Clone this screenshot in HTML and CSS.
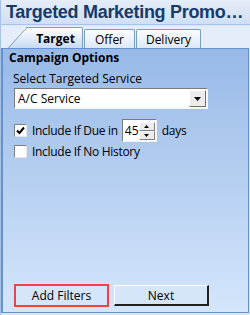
FILE: index.html
```html
<!DOCTYPE html>
<html>
<head>
<title>Targeted Marketing Promotion</title>
<meta charset='utf-8'/>
<link rel="stylesheet" href="styles.css">
</head>
<body>
<div class="window">
	<div class="title">Targeted Marketing Promo…</div>
	<div class="tabs">
		<div class="tab active">
			<svg class="slant" width="20" height="21" viewBox="0 0 20 21"><path d="M0.5 21 L18 1.5 L20 0.5" fill="none" stroke="#7b9ebd"/></svg>
			<span>Target</span>
		</div>
		<div class="tab offer"><span>Offer</span></div>
		<div class="tab delivery"><span>Delivery</span></div>
	</div>
	<div class="panel">
		<div class="heading">Campaign Options</div>
		<div class="label">Select Targeted Service</div>
		<div class="select">
			<span class="value">A/C Service</span>
			<span class="drop"><svg width="7" height="4" viewBox="0 0 7 4"><path d="M0 0 H7 L3.5 4 Z" fill="#000"/></svg></span>
		</div>
		<div class="row">
			<span class="box"><svg width="11" height="11" viewBox="0 0 11 11"><path d="M2 5.5 L4.5 8 L9 2.5" fill="none" stroke="#000" stroke-width="2"/></svg></span>
			<span class="text">Include If Due in</span>
			<span class="spin">
				<span class="num">45</span>
				<span class="arrows">
					<span class="arr"><svg width="5" height="3" viewBox="0 0 5 3"><path d="M0 3 H5 L2.5 0 Z" fill="#000"/></svg></span>
					<span class="arr"><svg width="5" height="3" viewBox="0 0 5 3"><path d="M0 0 H5 L2.5 3 Z" fill="#000"/></svg></span>
				</span>
			</span>
			<span class="text">days</span>
		</div>
		<div class="row second">
			<span class="box"></span>
			<span class="text">Include If No History</span>
		</div>
		<div class="buttons">
			<div class="btn marked">Add Filters</div>
			<div class="btn">Next</div>
		</div>
	</div>
</div>
</body>
</html>
```

FILE: styles.css
```css
body {
	margin: 0;
	font-family: "Open Sans", "DejaVu Sans", sans-serif;
	font-size: 12px;
	color: #000;
}
.window {
	width: 250px;
	height: 315px;
	display: flex;
	flex-direction: column;
	background: #d9e6f6;
	border-left: 1px solid #a6c2e6;
	box-sizing: border-box;
	overflow: hidden;
}
.title {
	height: 24px;
	line-height: 25px;
	padding-left: 5px;
	font-family: "Liberation Sans", sans-serif;
	font-size: 18px;
	font-weight: bold;
	color: #173a6b;
	background: linear-gradient(#e4edf8, #cfdff3);
	border-bottom: 1px solid #a9c4e8;
	white-space: nowrap;
	letter-spacing: -0.3px;
}
.tabs {
	height: 22px;
	display: flex;
	align-items: flex-end;
	padding-left: 6px;
	background: #e4edf9;
	margin-top: 1px;
}
.tab {
	height: 19px;
	display: flex;
	align-items: center;
	justify-content: center;
	border: 1px solid #7b9ebd;
	border-bottom: none;
	border-radius: 2px 2px 0 0;
	background: linear-gradient(#fbfdff, #dde8f7);
	box-sizing: border-box;
	margin-right: 1px;
}
.tab.active {
	position: relative;
	height: 21px;
	width: 76px;
	padding-left: 22px;
	border-left: none;
	font-weight: bold;
	background: linear-gradient(#ffffff, #c7daf3);
	clip-path: polygon(0 100%, 18px 1px, 20px 0, 100% 0, 100% 100%);
}
.tab .slant {
	position: absolute;
	left: 0;
	top: 0;
}
.tab.offer {
	width: 51px;
}
.tab.delivery {
	width: 65px;
}
.panel {
	flex: 1;
	display: flex;
	flex-direction: column;
	background: linear-gradient(#98b9e7, #d4e6fb);
	border: 1px solid #6591cd;
	border-left-width: 2px;
	margin-right: 1px;
	margin-bottom: 2px;
	padding: 0 6px 5px 6px;
}
.heading {
	font-weight: bold;
	height: 17px;
}
.label {
	margin-top: 4px;
	padding-left: 4px;
	height: 17px;
}
.select {
	margin: 1px 0 0 5px;
	width: 194px;
	height: 21px;
	display: flex;
	align-items: center;
	justify-content: space-between;
	background: #fff;
	border: 1px solid #7a7a7a;
	border-right-color: #f4f4f4;
	border-bottom-color: #f4f4f4;
	box-sizing: border-box;
}
.select .value {
	padding-left: 3px;
}
.drop {
	width: 17px;
	height: 17px;
	margin-right: 1px;
	display: flex;
	align-items: center;
	justify-content: center;
	background: #ececec;
	border: 1px solid #fff;
	border-right-color: #707070;
	border-bottom-color: #707070;
	box-sizing: border-box;
}
.row {
	display: flex;
	align-items: center;
	margin: 10px 0 0 5px;
	height: 23px;
}
.row .text {
	letter-spacing: -0.3px;
}
.row.second {
	margin-top: 1px;
	height: 16px;
}
.box {
	width: 13px;
	height: 13px;
	box-sizing: border-box;
	background: #fff;
	border: 1px solid #808080;
	border-right-color: #e6e6e6;
	border-bottom-color: #e6e6e6;
	display: flex;
	align-items: center;
	justify-content: center;
	margin-right: 5px;
}
.spin {
	width: 35px;
	height: 23px;
	display: flex;
	align-items: center;
	margin: 0 5px 0 4px;
	background: #fff;
	border: 1px solid #7a7a7a;
	border-right-color: #f4f4f4;
	border-bottom-color: #f4f4f4;
	box-sizing: border-box;
}
.num {
	flex: 1;
	padding-left: 2px;
}
.arrows {
	width: 16px;
	display: flex;
	flex-direction: column;
	margin-right: 1px;
}
.arr {
	height: 9px;
	display: flex;
	align-items: center;
	justify-content: center;
	background: #ececec;
	border: 1px solid #fff;
	border-right-color: #808080;
	border-bottom-color: #808080;
	box-sizing: border-box;
}
.buttons {
	margin-top: auto;
	display: flex;
	gap: 5px;
	padding-left: 5px;
}
.btn {
	width: 95px;
	height: 21px;
	display: flex;
	align-items: center;
	justify-content: center;
	background: #d5e5fa;
	border: 1px solid #fff;
	border-right: 2px solid #202020;
	border-bottom: 2px solid #202020;
	box-sizing: border-box;
}
.btn.marked {
	border: 2px solid #ef4343;
	height: 23px;
	margin-top: -1px;
}
```
